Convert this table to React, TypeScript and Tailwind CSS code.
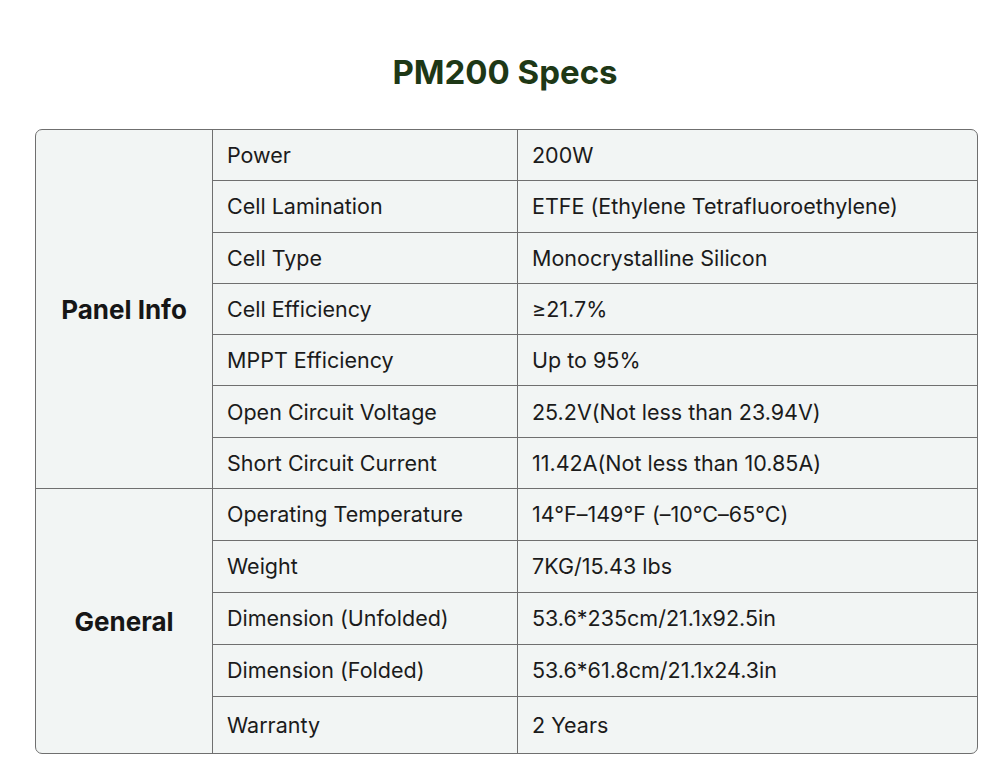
const panelInfo: [string, string][] = [
  ["Power", "200W"],
  ["Cell Lamination", "ETFE (Ethylene Tetrafluoroethylene)"],
  ["Cell Type", "Monocrystalline Silicon"],
  ["Cell Efficiency", "≥21.7%"],
  ["MPPT Efficiency", "Up to 95%"],
  ["Open Circuit Voltage", "25.2V(Not less than 23.94V)"],
  ["Short Circuit Current", "11.42A(Not less than 10.85A)"],
];

const general: [string, string][] = [
  ["Operating Temperature", "14°F–149°F (–10℃–65℃)"],
  ["Weight", "7KG/15.43 lbs"],
  ["Dimension (Unfolded)", "53.6*235cm/21.1x92.5in"],
  ["Dimension (Folded)", "53.6*61.8cm/21.1x24.3in"],
  ["Warranty", "2 Years"],
];

function Section({
  title,
  rows,
  className,
  rowClass,
}: {
  title: string;
  rows: [string, string][];
  className: string;
  rowClass: string;
}) {
  return (
    <div className={`flex ${className}`}>
      <div className="w-[177px] shrink-0 flex items-center justify-center border-r border-[#6f6f6f] text-[26px] font-bold text-[#161616]">
        {title}
      </div>
      <div className="flex-1 flex flex-col">
        {rows.map(([k, v], i) => {
          const last = i === rows.length - 1;
          return (
            <div
              key={k}
              className={`flex items-center ${last ? "flex-1" : `${rowClass} border-b border-[#6f6f6f]`}`}
            >
              <div className="w-[305px] shrink-0 self-stretch flex items-center pl-[14px] border-r border-[#6f6f6f]">
                {k}
              </div>
              <div className="pl-[14px]">{v}</div>
            </div>
          );
        })}
      </div>
    </div>
  );
}

export default function App() {
  return (
    <div
      className="w-[1000px] h-[781px] bg-white text-[#1b1b1b] [font-feature-settings:'calt'_0]"
      style={{ fontFamily: "Inter, 'Noto Sans', sans-serif" }}
    >
      <h1 className="pt-[46px] pl-[10px] text-center text-[33px] leading-[52px] font-bold text-[#1e3816]">
        PM200 Specs
      </h1>
      <div className="mt-[31px] ml-[35px] w-[943px] h-[625px] flex flex-col rounded-[7px] border border-[#6f6f6f] bg-[#f2f5f4] text-[21.5px] overflow-hidden">
        <Section
          title="Panel Info"
          rows={panelInfo}
          rowClass="h-[51.3px]"
          className="h-[359px] border-b border-[#6f6f6f]"
        />
        <Section title="General" rows={general} rowClass="h-[52px]" className="flex-1" />
      </div>
    </div>
  );
}
